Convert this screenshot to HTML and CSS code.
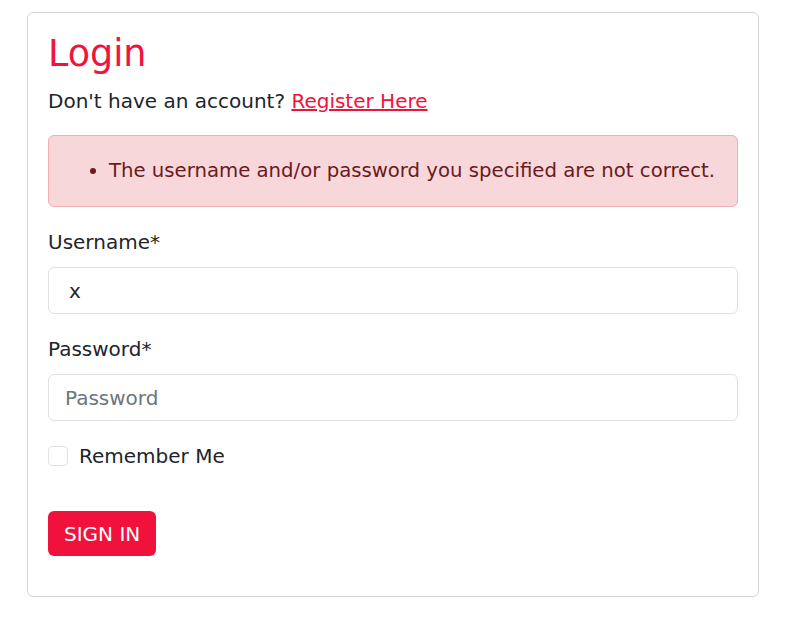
FILE: index.html
```html
<!DOCTYPE html>
<html lang="en">
<head>
<meta charset="utf-8">
<title>Login</title>
<link rel="stylesheet" href="styles.css">
</head>
<body>
<div class="card">
  <h1 class="title">Login</h1>
  <p class="subtitle">Don't have an account? <a href="#" class="link">Register Here</a></p>
  <div class="alert">
    <ul class="alert-list">
      <li>The username and/or password you specified are not correct.</li>
    </ul>
  </div>
  <form class="form">
    <div class="group">
      <label class="label" for="username">Username*</label>
      <input class="input input-value" id="username" type="text" value="x">
    </div>
    <div class="group">
      <label class="label" for="password">Password*</label>
      <input class="input" id="password" type="password" placeholder="Password">
    </div>
    <div class="check-row">
      <span class="checkbox"></span>
      <span class="check-label">Remember Me</span>
    </div>
    <button type="button" class="btn">SIGN IN</button>
  </form>
</div>
</body>
</html>
```
FILE: styles.css
```css
html, body {
  margin: 0;
  padding: 0;
  background: #ffffff;
}
body {
  padding: 12px 27px;
  font-family: "DejaVu Sans", "Open Sans", sans-serif;
  font-size: 20px;
  color: #212529;
}
.card {
  border: 1px solid #d4d4d4;
  border-radius: 6px;
  padding: 18px 20px 40px;
}
.title {
  margin: 0 0 9px;
  font-size: 36.5px;
  line-height: 46px;
  font-weight: 400;
  color: #f2133d;
}
.subtitle {
  margin: 0 0 19px;
  line-height: 30px;
}
.link {
  color: #f0123c;
  text-decoration: underline;
}
.alert {
  background: #f8d7da;
  border: 1px solid #f1aeb5;
  border-radius: 6px;
  padding: 20px 16px;
  color: #6a1a21;
  font-size: 19.7px;
}
.alert-list {
  margin: 0;
  padding-left: 44px;
  line-height: 30px;
}
.form {
  margin-top: 20px;
}
.group {
  margin-bottom: 20px;
}
.label {
  display: block;
  line-height: 30px;
  margin-bottom: 10px;
}
.input {
  display: block;
  box-sizing: border-box;
  width: 100%;
  height: 47px;
  border: 1px solid #dee2e6;
  border-radius: 6px;
  padding: 0 16px;
  font-family: inherit;
  font-size: 20px;
  color: #212529;
  background: #fff;
  outline: none;
}
.input-value {
  padding-left: 20px;
}
.input::placeholder {
  color: #6c757d;
}
.check-row {
  display: flex;
  align-items: center;
  height: 30px;
  margin-bottom: 40px;
}
.checkbox {
  box-sizing: border-box;
  width: 20px;
  height: 20px;
  border: 1px solid #dee2e6;
  border-radius: 4px;
  margin-right: 11px;
}
.check-label {
  line-height: 30px;
}
.btn {
  display: block;
  height: 45px;
  padding: 0 16px;
  border: none;
  border-radius: 6px;
  background: #f0123c;
  color: #fff;
  font-family: inherit;
  font-size: 20px;
}
```
